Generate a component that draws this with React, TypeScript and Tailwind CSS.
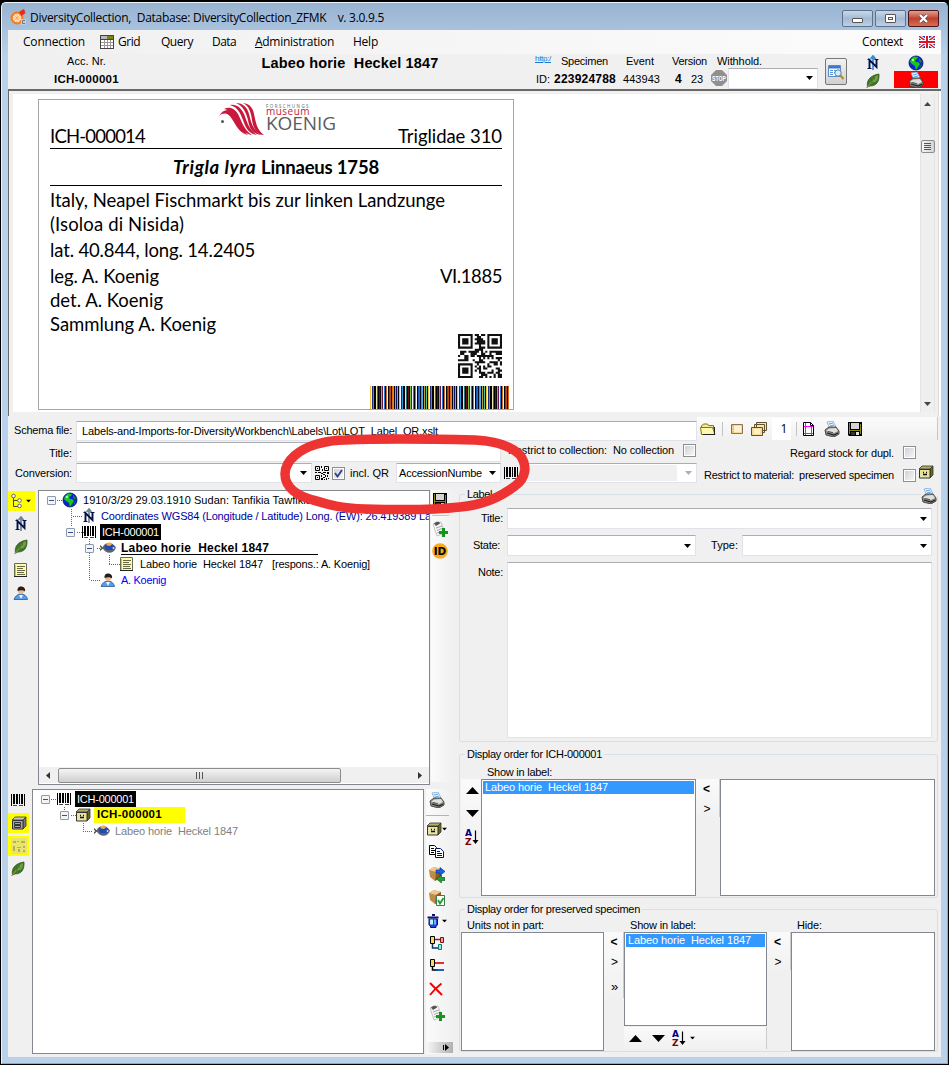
import React, { useLayoutEffect, useRef, useState } from "react";

type TProps = { w: number; c?: string; children: React.ReactNode };

/* Single line of text whose tracking is adjusted so that it spans exactly w pixels. */
function T({ w, c = "", children }: TProps) {
  const ref = useRef<HTMLSpanElement>(null);
  const [ls, setLs] = useState(0);
  useLayoutEffect(() => {
    const el = ref.current;
    if (!el) return;
    const n = (el.textContent || "").length;
    setLs((w - el.getBoundingClientRect().width) / n);
  }, [w]);
  return (
    <span ref={ref} className={"shrink-0 whitespace-pre leading-none " + c} style={{ letterSpacing: ls + "px" }}>
      {children}
    </span>
  );
}

type IP = { c?: string };
const S = ({ c = "", children, w = 16, h = 16 }: { c?: string; children: React.ReactNode; w?: number; h?: number }) => (
  <svg width={w} height={h} viewBox={`0 0 ${w} ${h}`} className={"block shrink-0 " + c}>
    {children}
  </svg>
);

const Globe = ({ c }: IP) => (
  <S c={c}>
    <circle cx="8" cy="8" r="7" fill="#0a22d8" stroke="#001058" strokeWidth=".8" />
    <path d="M3 4 6 1.500 10 2 9 4 7 5 8 7 10 7 12 9 10 12 8 15 7 11 4 9 2 7z" fill="#18c818" />
    <path d="M11 3 14 6 13 8 11 6zM12 11l2-1-2 3z" fill="#0b8a2a" />
    <circle cx="5" cy="5" r="1.2" fill="#a4f8a4" />
  </S>
);
const Compass = ({ c, grey }: IP & { grey?: boolean }) => (
  <S c={c}>
    <path d="M8 1v14M5.500 4 8 1l2.500 3" stroke={grey ? "#6c8490" : "#2f8bd8"} strokeWidth="1.700" fill="none" />
    <path d="M4.500 13V5L11.500 12V4" stroke="#06104a" strokeWidth="1.900" fill="none" />
    <path d="M2.500 13.500h4M9.500 4.500h4M2.500 4.500h2" stroke="#06104a" strokeWidth="1" />
  </S>
);
const Leaf = ({ c }: IP) => (
  <S c={c}>
    <path d="M2.500 14C1 7 6 2 14 1c.5 7-2 12-9 12z" fill="#3c7a2a" stroke="#24521a" strokeWidth=".7" />
    <path d="M5 11C6 7 9 4 13 2c0 5-2 8-8 9z" fill="#69a548" />
    <path d="M1.500 15 12 3" stroke="#a08a3a" strokeWidth="1.100" />
    <path d="M7 9V6M6 10h4M9 7V4" stroke="#24521a" strokeWidth=".7" />
  </S>
);
const Printer = ({ c }: IP) => (
  <S c={c}>
    <path d="M3 1 9 0l3 6-6 2z" fill="#e8f4ff" stroke="#7aa8d8" strokeWidth=".8" />
    <path d="M5 3l4-1M6 5l4-1" stroke="#58a0e8" />
    <path d="M1 9 5 6l7 0 3 4v3l-5 3-8-2z" fill="#8c8c88" stroke="#3c3c3c" strokeWidth=".9" />
    <path d="M2 9.500 5.500 7.500 12 7l2 3-4 2z" fill="#e0dfd8" />
    <path d="M3 12l7 2 4-2" stroke="#222" strokeWidth="1.300" fill="none" />
    <path d="M4 10.500l5 1.200" stroke="#555" />
  </S>
);
const Barcode = ({ c }: IP) => (
  <S c={c}>
    <path d="M1.500 2v12M14.500 2v12M9.500 2v10" stroke="#000" />
    <path d="M3 2h2v10H3zM6 2h2v10H6zM11 2h2v10h-2z" fill="#000" />
    <path d="M3 13.500h4M9 13.500h4" stroke="#444" />
  </S>
);
const Fish = ({ c }: IP) => (
  <S c={c}>
    <path d="M0 5.500 3 8 0 10.500 1.500 8z" fill="#555" stroke="#555" />
    <path d="M2.500 8C4 2 12 1 16 7.500c-2 7-10.500 7-13.500.5z" fill="#5a6470" />
    <path d="M4.500 6.500C7 2.500 12 3 14.500 7L12 10H6z" fill="#2348b8" />
    <path d="M6 3.500C8 2 11 2 12.500 3.800L10 6 7 5.500z" fill="#e8b048" />
    <circle cx="13.500" cy="8" r=".9" fill="#dde" />
  </S>
);
const Note = ({ c }: IP) => (
  <S c={c}>
    <path d="M2.500 1.500h12v13h-12z" fill="#fdfbb0" stroke="#6c6c50" />
    <path d="M5 4.500h8M5 6.500h6M5 8.500h8M5 10.500h7M5 12.500h8" stroke="#666640" />
    <path d="M3.500 3v11" stroke="#c8c070" />
    <path d="M2 14.500h13" stroke="#222" />
  </S>
);
const Person = ({ c }: IP) => (
  <S c={c}>
    <path d="M1 14.500C2 11 5 9 8 9s6 2 6.500 5.500z" fill="#5a9ce4" stroke="#2458a0" strokeWidth=".8" />
    <path d="M6 10h4l-2 4z" fill="#eef6ff" />
    <circle cx="8" cy="6" r="3" fill="#e8b890" />
    <path d="M4.500 6C4 2 7 1 9 1.500c2.500.5 3.500 2.500 3 5C10 4.500 7 5 4.500 6z" fill="#2a1c16" />
  </S>
);
const Cabinet = ({ c, grey }: IP & { grey?: boolean }) => (
  <S c={c}>
    <path d="M1 5 4 2h11l-3 3z" fill={grey ? "#c8c8c8" : "#b4b060"} stroke="#333" strokeWidth=".8" />
    <path d="M12 5 15 2v9l-3 3z" fill={grey ? "#777" : "#6c6818"} stroke="#333" strokeWidth=".8" />
    <path d="M1.500 5.500h10.500v8.500h-10.500z" fill={grey ? "#a8a8a8" : "#e8e4a0"} stroke="#333" />
    {grey ? (
      <path d="M3.500 7.500h6v2h-6zM3.500 10.500h6v2h-6z" fill="none" stroke="#333" />
    ) : (
      <path d="M5 8.500h1M8 8.500h1M5 10.500h4" stroke="#111" strokeWidth="1.300" />
    )}
  </S>
);
const Save = ({ c }: IP) => (
  <S c={c}>
    <path d="M1 1h14v14H2l-1-1z" fill="#000" />
    <path d="M2 2h1v11H2zM13 3h1v10h-1z" fill="#8a8a10" />
    <path d="M4 2h8v6H4z" fill="#d4d4d0" />
    <path d="M3 9h10v1H3z" fill="#8a8a10" />
    <path d="M9 11h3v3H9z" fill="#e8e8e8" />
    <path d="M4 11h4v3H4z" fill="#333" />
  </S>
);
const Folder = ({ c }: IP) => (
  <S c={c}>
    <path d="M1.500 13.500V5l2-2h4l1 1.500h5V8" fill="#f4e890" stroke="#807810" />
    <path d="M1.500 13.500 0.500 6.500h12l2.500 7z" fill="#fdf7b0" stroke="#807810" />
    <path d="M3 13.500h12M14.500 6v7.500" stroke="#222" />
  </S>
);
const Frame = ({ c }: IP) => (
  <S c={c}>
    <path d="M2.500 3.500h11v9h-11z" fill="#f8dc90" stroke="#907050" />
    <path d="M5 5h7v6H5z" fill="#fff2d0" />
    <path d="M3.500 5h1M3.500 8h1M3.500 11h1" stroke="#c07030" />
  </S>
);
const Frames = ({ c }: IP) => (
  <S c={c}>
    <path d="M5.500 1.500h10v8h-10zM3.500 3.500h10v8h-10z" fill="#f8e8b0" stroke="#605030" />
    <path d="M.5 6.500h11v8H.5z" fill="#f8dc90" stroke="#605030" />
    <path d="M3 8h6v5H3z" fill="#fff2d0" />
  </S>
);
const Page = ({ c }: IP) => (
  <S c={c}>
    <path d="M3.500 1.500h7l3 3v10h-10z" fill="#fff" stroke="#000" />
    <path d="M10.500 1.500v3h3" fill="none" stroke="#000" />
    <path d="M5.500 2v12M11.500 5v9M4 5.500h9M4 12.500h9" stroke="#f0f" />
  </S>
);
const DocPlus = ({ c }: IP) => (
  <S c={c}>
    <path d="M1 3 9 1l4 11-8 3z" fill="#f4f4f4" stroke="#b0b0b0" strokeWidth=".7" />
    <path d="M2 2.500C4 0 8 0 8 2.500L4 5z" fill="#555" />
    <path d="M4 7l6-2M5 9.500l5-2M5 12l3-1" stroke="#aaa" />
    <path d="M11.500 7v9M7 11.500h9" stroke="#14961c" strokeWidth="3" />
  </S>
);
const IdBadge = ({ c }: IP) => (
  <S c={c}>
    <circle cx="8" cy="8" r="7.800" fill="#fbaa1e" />
    <text x="8" y="12" textAnchor="middle" fontSize="10.500" fontWeight="700" fontFamily="DejaVu Sans" textLength="12.500">ID</text>
  </S>
);
const Copy = ({ c }: IP) => (
  <S c={c}>
    <path d="M1.500 2.500h5l2 2v7h-7z" fill="#fff" stroke="#000" />
    <path d="M3 5.500h3M3 7.500h4M3 9.500h3" stroke="#000" />
    <path d="M7.500 5.500h5l3 3v6h-8z" fill="#fff" stroke="#00106c" />
    <path d="M9 8.500h3M9 10.500h5M9 12.500h5" stroke="#00106c" />
  </S>
);
const Box = () => (
  <>
    <path d="M0 3 5 0l7 2v8l-6 4-5-4z" fill="#c08a48" />
    <path d="M0 3 5 0l7 2-5 3z" fill="#ecc890" />
    <path d="M7 5l5-3v8l-6 4z" fill="#8c5c24" />
  </>
);
const BoxArrows = ({ c }: IP) => (
  <S c={c}>
    <Box />
    <path d="M7 3h4V0.500l5 4-5 4V6H7z" fill="#1c60e8" stroke="#0a2878" strokeWidth=".6" />
    <path d="M16 10.500h-3.500V8l-5 4 5 4v-2.500H16z" fill="#20a030" stroke="#0a4c18" strokeWidth=".6" />
  </S>
);
const BoxCheck = ({ c }: IP) => (
  <S c={c}>
    <Box />
    <path d="M7.500 5.500h8v10h-8z" fill="#fff" stroke="#3c7c48" />
    <path d="M9 10l2 3.500L14.500 8" fill="none" stroke="#18a028" strokeWidth="1.800" />
  </S>
);
const Bucket = ({ c }: IP) => (
  <S c={c}>
    <path d="M.5 4.500h11M5 2h3" stroke="#10107c" strokeWidth="2" />
    <path d="M2 6h8.500v6l-1.500 1v1.500h-5.500V13L2 12z" fill="#2040e0" stroke="#10107c" />
    <path d="M3 6.500h3v5H3z" fill="#b8f4ff" />
    <path d="M7 6.500h2v5H7z" fill="#60b8f4" />
  </S>
);
const Hier = ({ c }: IP) => (
  <S c={c}>
    <path d="M1.500 1.500h4v7h-4z" fill="#fdd860" stroke="#000" />
    <path d="M6 4.500h5" stroke="#a01818" strokeWidth="1.500" />
    <path d="M11.500 2.500h3v5h-3z" fill="#f0a0a0" stroke="#801010" />
    <path d="M3.500 9v4H9" fill="none" stroke="#0c3468" strokeWidth="1.500" />
    <path d="M9.500 9.500h3v5h-3z" fill="#90f0e8" stroke="#087878" />
  </S>
);
const HierLines = ({ c }: IP) => (
  <S c={c}>
    <path d="M1.500 1.500h4v7h-4z" fill="#fdd860" stroke="#000" />
    <path d="M6 5h9" stroke="#e01818" strokeWidth="1.800" />
    <path d="M3.500 9v3H9" fill="none" stroke="#000" strokeWidth="1.500" />
    <path d="M7 12h8" stroke="#1050a8" strokeWidth="1.800" />
  </S>
);
const RedX = ({ c }: IP) => (
  <S c={c}>
    <path d="M2 2 14 14M13.500 2.500C9 6 5 10 2 14" fill="none" stroke="#f00000" strokeWidth="1.900" />
  </S>
);
const SortAZ = ({ c }: IP) => (
  <S c={c}>
    <text x="0" y="7" fontSize="9" fontWeight="700" fontFamily="DejaVu Sans" fill="#00007c">A</text>
    <text x="0" y="15.500" fontSize="9" fontWeight="700" fontFamily="DejaVu Sans" fill="#7c0000">Z</text>
    <path d="M10.500 1.500v11" stroke="#000" strokeWidth="1.200" />
    <path d="M7.500 11h6l-3 4z" fill="#000" />
  </S>
);
const TreeIcon = () => (
  <S>
    <path d="M3.500 4v9.500h5M3.500 7.500h5" fill="none" stroke="#444" />
    <circle cx="3.500" cy="3" r="1.800" fill="#fff" stroke="#666" />
    <circle cx="9.500" cy="7.500" r="1.800" fill="#fff" stroke="#666" />
    <circle cx="9.500" cy="13" r="1.800" fill="#fff" stroke="#666" />
  </S>
);
const PlanIcon = () => (
  <S>
    <path d="M0 0h16v16H0z" fill="#e8e46c" />
    <path d="M2 3h3v2H2zM6 3h2v1H6zM10 3h4v2h-4zM2 8h2v5H2zM6 9h4v1H6zM7 11h2v3H7zM12 8h2v2h-2zM12 12h2v2h-2z" fill="#b4b058" />
  </S>
);
const Stop = () => (
  <S>
    <path d="M5 0h6l5 5v6l-5 5H5l-5-5V5z" fill="#909090" />
    <text x="8" y="10.500" textAnchor="middle" fontSize="6.500" fontWeight="700" fontFamily="Liberation Sans" fill="#fff" textLength="14" lengthAdjust="spacingAndGlyphs">STOP</text>
  </S>
);
const GridIcon = () => (
  <S w={14} h={14}>
    <path d="M0 0h14v14H0z" fill="#444" />
    <path d="M1 1h6v3H1z" fill="#b8b8b8" />
    <path d="M7 1h6v3H7z" fill="#808010" />
    <path d="M1 5h12v8H1z" fill="#fff" />
    <path d="M1 7.500h12M1 10.500h12M4.500 5v8M7.500 5v8M10.500 5v8" stroke="#999" />
  </S>
);
const Flag = () => (
  <S w={16} h={12}>
    <path d="M0 0h16v12H0z" fill="#1c3ca8" />
    <path d="M0 0 16 12M16 0 0 12" stroke="#fff" strokeWidth="3.500" />
    <path d="M0 0 16 12M16 0 0 12" stroke="#d01c28" strokeWidth="1.400" />
    <path d="M8 0v12M0 6h16" stroke="#fff" strokeWidth="4" />
    <path d="M8 0v12M0 6h16" stroke="#d81828" strokeWidth="2" />
  </S>
);
const AppIcon = () => (
  <S>
    <circle cx="7" cy="9" r="6.500" fill="#f47c20" />
    <circle cx="7" cy="9" r="4.200" fill="#ffe8c8" />
    <path d="M7 4v10M2 9h10M3.500 5.500l7 7M10.500 5.500l-7 7" stroke="#f8a050" strokeWidth=".7" />
    <path d="M9 3l3-2 2-1 1.500 4-4 3z" fill="#e0301c" />
    <path d="M11 10h5v6h-5z" fill="#b9cfe6" />
    <path d="M15 11.500h-2.500v3h2.500" fill="none" stroke="#777" />
  </S>
);
const SearchForm = () => (
  <S>
    <path d="M.5 1.500h12v11H.5z" fill="#f4faff" stroke="#5c88c0" />
    <path d="M1 2h11v2.500H1z" fill="#3c78d0" />
    <path d="M2 6.500h3M2 8.500h3M2 10.500h3M6 6.500h5M6 8.500h3" stroke="#5c90d8" />
    <circle cx="10" cy="9" r="3.200" fill="#d4f0ff" stroke="#6080a0" />
    <path d="M12.500 11.500 15.500 15" stroke="#b88428" strokeWidth="2" />
  </S>
);

const Down = ({ c = "text-black" }: IP) => (
  <svg width="7" height="4" viewBox="0 0 7 4" className={"block shrink-0 " + c}>
    <path d="M0 0h7L3.500 4z" fill="currentColor" />
  </svg>
);
const TriUp = () => (
  <S w={13} h={7}><path d="M0 7 6.500 0 13 7z" /></S>
);
const TriDown = () => (
  <S w={13} h={7}><path d="M0 0h13L6.500 7z" /></S>
);

/* QR symbol */
const N = 21;
const dark = (x: number, y: number, n: number, seed: number) => {
  const eye = (ex: number, ey: number) => {
    const dx = Math.abs(x - ex - 3);
    const dy = Math.abs(y - ey - 3);
    const d = Math.max(dx, dy);
    return d > 4 ? -1 : d === 3 || d < 2 ? 1 : 0;
  };
  for (const [a, b] of [[0, 0], [n - 7, 0], [0, n - 7]]) {
    const v = eye(a, b);
    if (v >= 0) return v === 1;
  }
  return ((x * 73 + y * 151 + x * y * 37 + seed) ^ (x * x * 11 + y * y * 7)) % 9 > 3;
};
const QR = ({ size }: { size: number }) => {
  let d = "";
  for (let y = 0; y < N; y++) for (let x = 0; x < N; x++) if (dark(x, y, N, 5)) d += `M${x} ${y}h1v1h-1z`;
  return (
    <svg width={size} height={size} viewBox="0 0 21 21" className="block shrink-0">
      <path d={d} fill="#111" />
    </svg>
  );
};
const QRSmall = () => (
  <S w={14} h={14}>
    <path d="M.5.500h4v4h-4zM9.500.500h4v4h-4zM.5 9.500h4v4h-4z" fill="none" stroke="#000" />
    <path d="M2 2h1v1H2zM11 2h1v1h-1zM2 11h1v1H2zM6 0h1v2H6zM7 3h1v2H7zM0 6h2v1H0zM3 6h3v1H3zM6 7h2v1H6zM8 6h3v1H8zM12 6h2v2h-2zM6 9h1v2H6zM8 8h2v1H8zM10 9h1v1h-1zM12 9h1v2h-1zM8 11h2v1H8zM10 10h1v1h-1zM6 12h2v2H6zM11 12h1v2h-1zM13 12h1v1h-1zM9 13h1v1H9z" />
  </S>
);
const barColors = [
  "#f8c040", "#f4f4ff", "#1c2c80", "#2c98e8", "#000", "#000", "#f0e8b0", "#207870", "#000", "#6c0c10", "#100808", "#78c040", "#601c50",
  "#e8f0ff", "#2878d0", "#000", "#d06820", "#fff", "#000", "#1858b8", "#b84818", "#000c20", "#d86c20", "#58a8f0", "#000",
  "#c0a030", "#101060", "#50c890", "#000",
];
const ColorBars = () => (
  <svg width="139" height="23" viewBox="0 0 139 23" className="block shrink-0">
    {Array.from({ length: 139 }, (_, i) => (
      <rect key={i} x={i} y="0" width="1" height="23" fill={barColors[i % 29]} />
    ))}
  </svg>
);
const LogoWing = () => (
  <svg width="46" height="34" viewBox="0 0 46 34" className="block shrink-0">
    <g fill="#c8193c">
      <path d="M0 13C4 6 10 5 15 10c5 5 6 15 14 22-9-2-12-10-16-16C9 10 5 9 0 13z" />
      <path d="M5 6c6-3 11 0 14 5 4 7 5 15 14 21-9-1-13-9-16-15C14 11 11 7 5 6z" />
      <path d="M11 2c7-1 11 3 14 9 3 7 4 15 13 21-9-1-12-9-14-15C21 9 18 4 11 2z" />
      <path d="M17 0c7 0 11 4 13 11 2 7 3 15 12 21-9-1-12-8-13-15C27 9 24 3 17 0z" />
      <path d="M24 0c7 1 10 5 11 11 2 8 2 15 10 21-8 0-11-8-12-15C32 9 30 3 24 0z" />
    </g>
    <circle cx="3.500" cy="18.500" r="1.500" fill="#555" />
  </svg>
);

const Minus = () => (
  <span className="flex h-[9px] w-[9px] shrink-0 items-center justify-center rounded-[1px] border border-[#8f9aa8] bg-[#f4f4f4]">
    <span className="h-px w-[5px] bg-[#3c4c9c]" />
  </span>
);
const Check = ({ on, c = "" }: { on?: boolean; c?: string }) => (
  <span className={"flex h-[13px] w-[13px] shrink-0 items-center justify-center border border-[#8e8f8f] bg-white " + c}>
    <span className="flex h-[9px] w-[9px] items-center justify-center bg-gradient-to-br from-[#cfd3d8] to-[#f4f5f6]">
      {on && (
        <svg width="9" height="9" viewBox="0 0 9 9"><path d="M1 4 3.500 7.500 8 1" fill="none" stroke="#2c3f8c" strokeWidth="1.800" /></svg>
      )}
    </span>
  </span>
);
const field = "shrink-0 border border-[#e2e3ea] border-t-[#abadb3] bg-white ";
const Combo = ({ c, children, off }: { c: string; children?: React.ReactNode; off?: boolean }) => (
  <div className={field + "flex items-center pr-[4px] " + c}>
    {children}
    <Down c={"ml-auto " + (off ? "text-[#b0b0b0]" : "text-black")} />
  </div>
);
const list = "shrink-0 border border-[#828790] bg-white p-px ";
const group = "m-0 min-w-0 shrink-0 rounded-[3px] border border-[#d5dfe5] p-0 ";

const Header = () => (
  <div className="flex h-[35px] shrink-0 bg-[#f0f0f0]">
    <div className="flex w-[157px] flex-col items-center pt-[2px]">
      <T w={39} c="text-[11px] mb-[7px]">Acc. Nr.</T>
      <T w={65} c="text-[11.5px] font-bold">ICH-000001</T>
    </div>
    <div className="flex w-[370px] justify-center pt-[2px]">
      <T w={177} c="text-[14.5px] font-bold">{"Labeo horie  Heckel 1847"}</T>
    </div>
    <div className="flex w-[283px] flex-col">
      <div className="flex h-[14px] items-center">
        <T w={16} c="-mt-[4px] text-[8px] text-[#1874d0] underline">http:/</T>
        <T w={47} c="ml-[10px]">Specimen</T>
        <T w={28} c="ml-[18px]">Event</T>
        <T w={35} c="ml-[18px]">Version</T>
        <T w={45} c="ml-[10px]">Withhold.</T>
      </div>
      <div className="flex h-[20px] items-center">
        <T w={14} c="ml-px mt-[2px]">ID:</T>
        <T w={62} c="ml-[4px] mt-[2px] text-[12px] font-bold">223924788</T>
        <T w={37} c="ml-[7px] mt-[2px]">443943</T>
        <T w={7} c="ml-[15px] mt-[2px] text-[12px] font-bold">4</T>
        <T w={12} c="ml-[9px] mt-[2px]">23</T>
        <div className="ml-[8px]"><Stop /></div>
        <Combo c="ml-px h-[21px] w-[90px]" />
      </div>
    </div>
    <div className="ml-[7px] mt-[4px] flex h-[27px] w-[22px] items-center justify-center rounded-[2px] border border-[#777] bg-gradient-to-b from-[#f2f2f2] to-[#d0d0d0]">
      <SearchForm />
    </div>
    <div className="ml-[18px] flex flex-col gap-[2px] pt-px"><Compass /><Leaf /></div>
    <div className="ml-[13px] flex w-[44px] flex-col items-center pt-px">
      <Globe />
      <div className="flex h-[17px] w-full items-center justify-center bg-[#ff0000]"><Printer /></div>
    </div>
  </div>
);

const row = "flex items-center shrink-0 ";
const LabelCard = () => (
  <div className="ml-[25px] mt-[5px] flex h-[311px] w-[476px] shrink-0 flex-col border border-[#a5a5a5] bg-white pl-[11px] pr-[11px] font-['Lato'] text-[18.5px] text-black">
    <div className="flex h-[49px] items-start border-b border-black">
      <T w={95} c="mt-[27px]">ICH-000014</T>
      <div className="ml-[74px] mt-[3px]"><LogoWing /></div>
      <div className="ml-px mt-[4px] flex w-[69px] flex-col items-start font-['Open_Sans']">
        <T w={44} c="h-[4px] text-[4.5px] !leading-[4px] text-[#666]">FORSCHUNGS</T>
        <T w={44} c="h-[8px] text-[10px] !leading-[6px] text-[#c8193c]">museum</T>
        <T w={70} c="h-[15px] text-[19px] !leading-[15px] text-[#5c5c5c]">KOENIG</T>
      </div>
      <T w={104} c="ml-auto mt-[27px]">Triglidae 310</T>
    </div>
    <div className="flex h-[37px] items-center justify-center border-b border-black pt-px font-bold">
      <T w={88} c="italic">{"Trigla lyra "}</T>
      <T w={118}>Linnaeus 1758</T>
    </div>
    <div className={row + "mt-[2px] h-[24px]"}><T w={395}>Italy, Neapel Fischmarkt bis zur linken Landzunge</T></div>
    <div className={row + "h-[24px]"}><T w={134}>(Isoloa di Nisida)</T></div>
    <div className={row + "mt-[2px] h-[24px]"}><T w={205}>lat. 40.844, long. 14.2405</T></div>
    <div className={row + "mt-[2px] h-[24px] justify-between"}><T w={109}>leg. A. Koenig</T><T w={62}>VI.1885</T></div>
    <div className={row + "h-[24px]"}><T w={113}>det. A. Koenig</T></div>
    <div className={row + "h-[24px]"}><T w={166}>Sammlung A. Koenig</T></div>
    <div className="-mt-[2px] flex justify-end"><QR size={44} /></div>
    <div className="-mr-[7px] mt-[8px] flex justify-end"><ColorBars /></div>
  </div>
);

const Preview = () => (
  <div className="flex h-[327px] shrink-0 border-l border-t-2 border-[#696969] bg-[#f0f0f0]">
    <div className="ml-[4px] mt-[3px] flex h-[318px] w-[907px] bg-white"><LabelCard /></div>
    <div className="mt-[3px] flex h-[318px] w-[15px] flex-col items-center border-x border-[#e4e4e4] bg-[#efefef]">
      <svg width="7" height="4" viewBox="0 0 7 4" className="mt-[8px]"><path d="M0 4 3.500 0 7 4z" fill="#444" /></svg>
      <div className="mt-[34px] flex h-[13px] w-[14px] flex-col items-center justify-center gap-px rounded-[2px] border border-[#8c8c8c] bg-gradient-to-r from-[#f6f6f6] to-[#d4d4d8]">
        <span className="h-px w-[7px] bg-[#555]" /><span className="h-px w-[7px] bg-[#555]" /><span className="h-px w-[7px] bg-[#555]" /><span className="h-px w-[7px] bg-[#555]" />
      </div>
      <svg width="7" height="4" viewBox="0 0 7 4" className="mb-[6px] mt-auto"><path d="M0 0h7L3.500 4z" fill="#444" /></svg>
    </div>
    <div className="ml-auto w-[3px] border-l border-[#dcdcdc] bg-white" />
  </div>
);

const Form = () => (
  <div className="flex h-[70px] shrink-0 flex-col">
    <div className="flex h-[24px] items-start">
      <T w={58} c="ml-[6px] mt-[8px]">Schema file:</T>
      <div className={field + "ml-[4px] mt-[4px] flex h-[20px] w-[621px] items-center pl-[5px]"}>
        <T w={356}>Labels-and-Imports-for-DiversityWorkbench\Labels\Lot\LOT_Label_QR.xslt</T>
      </div>
      <div className="flex h-[23px] w-[241px] items-center border-r border-[#c8c8c8] bg-gradient-to-b from-[#fbfbfb] to-[#f0f0f0]">
        <Folder c="ml-[3px]" />
        <span className="ml-[6px] h-[14px] w-px bg-[#c4c4c4]" />
        <Frame c="ml-[6px]" />
        <Frames c="ml-[6px]" />
        <span className="ml-[5px] flex h-[22px] w-[19px] items-center justify-center bg-white pl-[4px]"><T w={6} c="font-['Open_Sans'] text-[12px]">1</T></span>
        <span className="ml-[5px] h-[14px] w-px bg-[#c4c4c4]" />
        <Page c="ml-[3px]" />
        <Printer c="ml-[8px]" />
        <Save c="ml-[7px]" />
      </div>
    </div>
    <div className="flex h-[21px] items-start">
      <T w={23} c="ml-[41px] mt-[7px]">Title:</T>
      <div className={field + "ml-[4px] mt-px h-[20px] w-[425px]"} />
      <T w={99} c="ml-[7px] mt-[4px]">Restrict to collection:</T>
      <T w={61} c="ml-[6px] mt-[4px]">No collection</T>
      <Check c="ml-[9px] mt-[3px]" />
      <T w={104} c="ml-[94px] mt-[7px]">Regard stock for dupl.</T>
      <Check c="ml-[9px] mt-[5px]" />
    </div>
    <div className="flex h-[25px] items-start">
      <T w={57} c="ml-[7px] mt-[6px]">Conversion:</T>
      <Combo c="ml-[4px] mt-px h-[20px] w-[236px]" />
      <div className="ml-[3px] mt-[4px]"><QRSmall /></div>
      <Check on c="ml-[3px] mt-[5px]" />
      <T w={39} c="ml-[5px] mt-[6px]">incl. QR</T>
      <Combo c="ml-[7px] mt-px h-[20px] w-[105px]"><T w={83} c="ml-[2px]">AccessionNumbe</T></Combo>
      <Barcode c="ml-[2px] mt-[3px]" />
      <div className={field + "mt-px flex h-[20px] w-[178px] items-center pl-px pr-[4px]"}>
        <span className="h-[16px] w-[156px] bg-[#f0f0f0]" />
        <Down c="ml-auto text-[#b0b0b0]" />
      </div>
      <T w={90} c="ml-[7px] mt-[8px]">Restrict to material:</T>
      <T w={95} c="ml-[5px] mt-[8px]">preserved specimen</T>
      <Check c="ml-[9px] mt-[7px]" />
      <Cabinet c="ml-[2px] mt-[2px]" />
    </div>
  </div>
);

const trow = "relative flex h-[16px] shrink-0 items-center ";
const Dots = ({ d }: { d: string }) => (
  <svg width="120" height="110" viewBox="0 0 120 110" className="absolute left-0 top-0">
    <path d={d} fill="none" stroke="#666" strokeDasharray="1 1" />
  </svg>
);

const TopTree = () => (
  <div className="flex h-[297px] shrink-0">
    <div className="flex w-[30px] flex-col">
      <div className="mt-[4px] flex h-[20px] w-[27px] items-center bg-[#ffff00] pl-[2px]"><TreeIcon /><span className="ml-[-2px]"><Down c="ml-px scale-75" /></span></div>
      <Compass grey c="ml-[5px] mt-[5px]" />
      <Leaf c="ml-[5px] mt-[7px]" />
      <Note c="ml-[4px] mt-[7px]" />
      <Person c="ml-[5px] mt-[7px]" />
    </div>
    <div className="relative mt-[3px] flex h-[295px] w-[392px] flex-col overflow-hidden border border-[#828790] bg-white pt-px">
      <Dots d="M18 9.500h8M32.500 18v18M34 25.500h10M38 41.500h8M50.500 48v42M58 57.500h6M70.500 64v10M70 73.500h12M52 89.500h10" />
      <div className={trow}><span className="w-[8px]" /><Minus /><Globe c="ml-[6px]" /><T w={229} c="ml-[5px]">1910/3/29 29.03.1910 Sudan: Tanfikia Tawfikia</T></div>
      <div className={trow}><Compass grey c="ml-[42px]" /><T w={330} c="ml-[4px] text-[#0000a0]">Coordinates WGS84 (Longitude / Latitude) Long. (EW): 26.419389 La</T></div>
      <div className={trow}><span className="w-[27px]" /><Minus /><Barcode c="ml-[6px]" /><span className="ml-[3px] flex h-[16px] w-[61px] items-center bg-black pl-[2px] text-white"><T w={57}>ICH-000001</T></span></div>
      <div className={trow}><span className="w-[46px]" /><Minus /><Fish c="ml-[6px]" /><span className="ml-[5px] flex h-[13px] w-[197px] items-center border-b border-black font-bold"><T w={148} c="text-[12px]">{"Labeo horie  Heckel 1847"}</T></span></div>
      <div className={trow}><Note c="ml-[79px]" /><T w={123} c="ml-[6px]">{"Labeo horie  Heckel 1847"}</T><T w={98} c="ml-[9px]">[respons.: A. Koenig]</T></div>
      <div className={trow}><Person c="ml-[61px]" /><T w={45} c="ml-[5px] text-[#0000ff]">A. Koenig</T></div>
      <div className="mb-px mt-auto flex h-[16px] items-center bg-[#f0f0f0] px-[7px]">
        <svg width="4" height="7" viewBox="0 0 4 7"><path d="M4 0v7L0 3.500z" fill="#333" /></svg>
        <div className="ml-[8px] flex h-[15px] w-[283px] items-center justify-center gap-[2px] rounded-[2px] border border-[#8c8c8c] bg-gradient-to-b from-[#f4f4f4] to-[#cfcfd1]">
          <span className="h-[7px] w-px bg-[#555]" /><span className="h-[7px] w-px bg-[#555]" /><span className="h-[7px] w-px bg-[#555]" />
        </div>
        <svg width="4" height="7" viewBox="0 0 4 7" className="ml-auto"><path d="M0 0v7L4 3.500z" fill="#333" /></svg>
      </div>
    </div>
    <div className="ml-px mt-[3px] flex h-[292px] w-[23px] flex-col items-start bg-gradient-to-r from-[#fbfbfb] to-[#f0f0f0] pl-px">
      <Save c="mt-[2px]" />
      <span className="mt-[7px] h-px w-[17px] bg-[#c4c4c4]" />
      <DocPlus c="mt-[5px]" />
      <IdBadge c="mt-[6px]" />
    </div>
  </div>
);

const BottomTree = () => (
  <div className="flex flex-1">
    <div className="flex w-[24px] flex-col">
      <Barcode c="ml-[2px] mt-[8px]" />
      <div className="mt-[5px] flex h-[20px] w-[21px] items-center justify-center bg-[#ffff00]"><Cabinet grey /></div>
      <div className="mt-[3px] flex h-[20px] w-[21px] items-center justify-center bg-[#ffff00]"><PlanIcon /></div>
      <Leaf c="ml-[2px] mt-[5px]" />
    </div>
    <div className="relative mt-[5px] flex h-[265px] w-[392px] flex-col border border-[#828790] bg-white pt-px">
      <Dots d="M18 9.500h6M31.500 17v3M38 25.500h6M50.500 33v8M50 41.500h10" />
      <div className={trow}><span className="w-[8px]" /><Minus /><Barcode c="ml-[6px]" /><span className="ml-[3px] flex h-[16px] w-[61px] items-center bg-black pl-[2px] text-white"><T w={57}>ICH-000001</T></span></div>
      <div className={trow}><span className="w-[27px]" /><Minus /><Cabinet c="ml-[6px]" /><span className="ml-[3px] flex h-[16px] w-[91px] items-center bg-[#ffff00] pl-[3px] font-bold"><T w={65} c="text-[11.5px]">ICH-000001</T></span></div>
      <div className={trow}><Fish c="ml-[61px]" /><T w={123} c="ml-[5px] text-[#808080]">{"Labeo horie  Heckel 1847"}</T></div>
    </div>
    <div className="ml-[2px] mt-[5px] flex h-[265px] w-[27px] flex-col items-start bg-gradient-to-r from-[#fbfbfb] to-[#f0f0f0]">
      <Printer c="ml-[3px] mt-[3px]" />
      <span className="mt-[7px] h-px w-[23px] bg-[#b4b4b4]" />
      <div className="mt-[5px] flex items-center"><Cabinet /><Down c="ml-[-1px] scale-75" /></div>
      <Copy c="ml-[2px] mt-[6px]" />
      <BoxArrows c="ml-[3px] mt-[8px]" />
      <BoxCheck c="ml-[3px] mt-[7px]" />
      <div className="mt-[7px] flex items-center"><Bucket c="ml-px" /><Down c="ml-[-2px] scale-75" /></div>
      <Hier c="ml-[3px] mt-[6px]" />
      <HierLines c="ml-[3px] mt-[7px]" />
      <RedX c="ml-[2px] mt-[7px]" />
      <DocPlus c="ml-[3px] mt-[8px]" />
      <div className="mb-px mt-auto flex h-[11px] w-[27px] items-center gap-px bg-gradient-to-r from-[#f8f8f8] to-[#b0b0b0] pl-[17px]">
        <span className="h-[5px] w-px bg-black" />
        <svg width="4" height="7" viewBox="0 0 4 7"><path d="M0 0v7L4 3.500z" /></svg>
      </div>
    </div>
  </div>
);

const Legend = ({ w, children }: { w: number; children: React.ReactNode }) => (
  <legend className="ml-[5px] flex h-[12px] items-center px-[2px]"><T w={w}>{children}</T></legend>
);
const strip = "flex flex-col shrink-0 items-center self-start bg-gradient-to-b from-[#fafafa] to-[#f1f1f1] ";
const Sel = () => (
  <div className="flex h-[13px] items-center bg-[#3399ff] pl-[2px] text-white"><T w={123}>{"Labeo horie  Heckel 1847"}</T></div>
);

const RightSide = () => (
  <div className="flex w-[482px] shrink-0 flex-col pl-0">
    <div className="relative flex">
      <fieldset className={group + "mt-px h-[254px] w-[479px]"}>
        <Legend w={25}>Label</Legend>
        <div className="mt-[8px] flex h-[21px] items-center">
          <T w={22} c="ml-[21px] mr-[4px]">Title:</T><Combo c="h-[21px] w-[425px]" />
        </div>
        <div className="mt-[6px] flex h-[21px] items-center">
          <T w={27} c="ml-[13px] mr-[7px]">State:</T><Combo c="h-[21px] w-[189px]" />
          <T w={27} c="ml-[15px] mr-[4px]">Type:</T><Combo c="h-[21px] w-[190px]" />
        </div>
        <div className="mt-[6px] flex">
          <T w={25} c="ml-[18px] mr-[4px] mt-[5px]">Note:</T><div className={field + "h-[176px] w-[425px]"} />
        </div>
      </fieldset>
      <div className="absolute left-[462px] top-px bg-[#f0f0f0]"><Printer /></div>
    </div>
    <fieldset className={group + "mt-[6px] h-[150px] w-[479px]"}>
      <Legend w={135}>Display order for ICH-000001</Legend>
      <div className="mt-[7px] flex h-[11px] items-center pl-[27px]"><T w={65}>Show in label:</T></div>
      <div className="mt-px flex pl-px">
        <div className={strip + "h-[68px] w-[20px] gap-[16px] pl-[3px] pt-[8px]"}><TriUp /><TriDown /><SortAZ c="-mt-[4px]" /></div>
        <div className={list + "h-[117px] w-[215px]"}><Sel /></div>
        <div className={strip + "h-[38px] w-[24px] gap-[8px] border-r border-[#ccc] pr-px pt-[4px] font-bold"}><T w={8} c="text-[12px]">{"<"}</T><T w={7} c="font-normal text-[12px]">{">"}</T></div>
        <div className={list + "h-[117px] w-[215px]"} />
      </div>
    </fieldset>
    <fieldset className={group + "mt-[5px] h-[149px] w-[479px]"}>
      <Legend w={173}>Display order for preserved specimen</Legend>
      <div className="mt-[4px] flex h-[13px] items-center">
        <T w={77} c="ml-[7px]">Units not in part:</T><T w={66} c="ml-[86px]">Show in label:</T><T w={25} c="ml-[101px]">Hide:</T>
      </div>
      <div className="flex pl-px">
        <div className={list + "h-[119px] w-[143px]"} />
        <div className={strip + "h-[66px] w-[20px] gap-[8px] border-r border-[#ccc] pl-[2px] pt-[4px] font-bold"}><T w={8} c="text-[12px]">{"<"}</T><T w={7} c="font-normal text-[12px]">{">"}</T><T w={7} c="mt-[4px] text-[13px] font-normal">»</T></div>
        <div className="flex flex-col">
          <div className={list + "h-[94px] w-[143px]"}><Sel /></div>
          <div className="mt-px flex h-[22px] items-center border-r border-[#ccc] bg-gradient-to-b from-[#fafafa] to-[#f1f1f1] pl-[5px]">
            <TriUp /><span className="w-[10px]" /><TriDown /><SortAZ c="ml-[7px]" /><Down c="ml-px scale-75" />
          </div>
        </div>
        <div className={strip + "h-[38px] w-[24px] gap-[8px] border-r border-[#ccc] pr-px pt-[4px] font-bold"}><T w={8} c="text-[12px]">{"<"}</T><T w={7} c="font-normal text-[12px]">{">"}</T></div>
        <div className={list + "h-[119px] w-[144px]"} />
      </div>
    </fieldset>
  </div>
);

const capBtn = "flex h-[17px] items-center justify-center rounded-[2px] border ";

export default function App() {
  return (
    <div className="relative flex h-[1065px] w-[949px] flex-col overflow-hidden bg-black font-['Liberation_Sans',sans-serif] text-[11px] text-black">
      <div className="ml-px mt-[2px] flex h-[1062px] w-[947px] flex-col rounded-t-[5px] border border-[#eef5fb] border-b-[#2fd0e8] border-r-[#2fd0e8] bg-gradient-to-b from-[#98b3d1] via-[#b9d1ea] via-5% to-[#b9d1ea] px-[6px]">
        <div className="-ml-px flex h-[27px] shrink-0 items-center pl-[3px] font-['Open_Sans']">
          <AppIcon />
          <T w={354} c="ml-[4px] mt-[3px] text-[12px]">{"DiversityCollection,  Database: DiversityCollection_ZFMK    v. 3.0.9.5"}</T>
          <div className="ml-auto mr-[2px] mt-[4px] flex gap-[2px]">
            <span className={capBtn + "w-[31px] border-[#5c728c] bg-gradient-to-b from-[#c8d8ea] via-[#a4bad2] to-[#bcd0e6]"}><span className="mt-[3px] h-[5px] w-[11px] rounded-[1px] border border-[#555] bg-white" /></span>
            <span className={capBtn + "w-[31px] border-[#5c728c] bg-gradient-to-b from-[#c8d8ea] via-[#a4bad2] to-[#bcd0e6]"}><span className="flex h-[9px] w-[11px] items-center justify-center rounded-[1px] border border-[#555] bg-white"><span className="h-[3px] w-[5px] border border-[#555]" /></span></span>
            <span className={capBtn + "w-[31px] border-[#501418] bg-gradient-to-b from-[#e0a090] via-[#c04030] to-[#d07050]"}><svg width="11" height="9" viewBox="0 0 11 9"><path d="M2 1l7 7M9 1 2 8" stroke="#555" strokeWidth="3.800" /><path d="M2 1l7 7M9 1 2 8" stroke="#fff" strokeWidth="2.200" /></svg></span>
          </div>
        </div>
        <div className="flex h-[1027px] w-[933px] shrink-0 flex-col bg-[#f0f0f0]">
          <div className="flex h-[24px] shrink-0 items-center bg-gradient-to-r from-[#f0f0f0] to-[#fcfcfc] font-['Open_Sans'] text-[12px]">
            <T w={62} c="ml-[15px]">Connection</T>
            <span className="ml-[15px]"><GridIcon /></span>
            <T w={22} c="ml-[4px]">Grid</T>
            <T w={32} c="ml-[21px]">Query</T>
            <T w={24} c="ml-[19px]">Data</T>
            <T w={79} c="ml-[19px]"><span className="underline">A</span>dministration</T>
            <T w={25} c="ml-[19px]">Help</T>
            <T w={41} c="ml-auto">Context</T>
            <span className="ml-[16px] mr-[6px]"><Flag /></span>
          </div>
          <Header />
          <Preview />
          <div className="-mt-px flex shrink-0 flex-col pt-[2px]"><Form /></div>
          <div className="flex h-[570px] shrink-0">
            <div className="flex w-[451px] shrink-0 flex-col"><TopTree /><BottomTree /></div>
            <RightSide />
          </div>
        </div>
      </div>
      <svg width="270" height="90" viewBox="0 0 270 90" className="pointer-events-none absolute left-[270px] top-[430px] blur-[0.6px]">
        <path d="M47 14C30 19 15 30 15 44c0 14 13 22 28 26 17 5 27 8 52 9 35 1 70 1 95-2 25-2 42-11 55-21 11-8 13-20 5-31-10-10-25-14-45-15C160 9 100 9 75 10 62 10 55 12 47 14z" fill="none" stroke="#ee3333" strokeWidth="9.500" strokeLinejoin="round" />
      </svg>
    </div>
  );
}
